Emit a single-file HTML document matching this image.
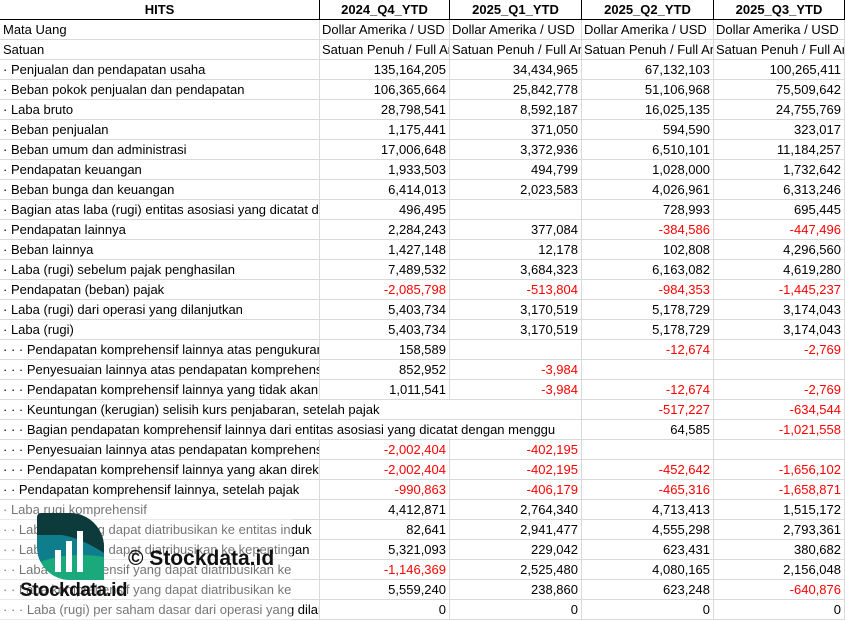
<!DOCTYPE html>
<html><head><meta charset="utf-8"><style>
*{margin:0;padding:0;box-sizing:border-box}
body{width:845px;height:621px;background:#fff;position:relative;overflow:hidden;font-family:"Liberation Sans",Calibri,sans-serif;font-size:13px;color:#000}
.r{position:absolute;left:0;width:845px;height:20px;border-bottom:1px solid #d9d9d9}
.c{position:absolute;top:0;height:19px;line-height:19px;white-space:nowrap;overflow:hidden;border-right:1px solid #d9d9d9}
.l{left:0;width:320px;padding-left:3px}
.a{left:320px;width:130px;text-align:right;padding-right:3px}
.b{left:450px;width:132px;text-align:right;padding-right:3px}
.d{left:582px;width:132px;text-align:right;padding-right:3px}
.e{left:714px;width:131px;text-align:right;padding-right:3px}
.t .a,.t .b,.t .d,.t .e{text-align:left;padding-left:2px;padding-right:0}
.h{border-bottom:1px solid #000}
.h .c{font-weight:bold;text-align:center;border-right:1px solid #000;padding:0}
.n{color:#ff0000}
.wide{width:580px;overflow:visible;background:transparent;border-right:none}
.nb{border-right:none}
</style></head><body>
<div class="r h" style="top:0"><div class="c l">HITS</div><div class="c a">2024_Q4_YTD</div><div class="c b">2025_Q1_YTD</div><div class="c d">2025_Q2_YTD</div><div class="c e">2025_Q3_YTD</div></div>
<div class="r t" style="top:20px"><div class="c l">Mata Uang</div><div class="c a">Dollar Amerika / USD</div><div class="c b">Dollar Amerika / USD</div><div class="c d">Dollar Amerika / USD</div><div class="c e">Dollar Amerika / USD</div></div>
<div class="r t" style="top:40px"><div class="c l">Satuan</div><div class="c a">Satuan Penuh / Full Amount</div><div class="c b">Satuan Penuh / Full Amount</div><div class="c d">Satuan Penuh / Full Amount</div><div class="c e">Satuan Penuh / Full Amount</div></div>
<div class="r" style="top:60px"><div class="c l">· Penjualan dan pendapatan usaha</div><div class="c a">135,164,205</div><div class="c b">34,434,965</div><div class="c d">67,132,103</div><div class="c e">100,265,411</div></div>
<div class="r" style="top:80px"><div class="c l">· Beban pokok penjualan dan pendapatan</div><div class="c a">106,365,664</div><div class="c b">25,842,778</div><div class="c d">51,106,968</div><div class="c e">75,509,642</div></div>
<div class="r" style="top:100px"><div class="c l">· Laba bruto</div><div class="c a">28,798,541</div><div class="c b">8,592,187</div><div class="c d">16,025,135</div><div class="c e">24,755,769</div></div>
<div class="r" style="top:120px"><div class="c l">· Beban penjualan</div><div class="c a">1,175,441</div><div class="c b">371,050</div><div class="c d">594,590</div><div class="c e">323,017</div></div>
<div class="r" style="top:140px"><div class="c l">· Beban umum dan administrasi</div><div class="c a">17,006,648</div><div class="c b">3,372,936</div><div class="c d">6,510,101</div><div class="c e">11,184,257</div></div>
<div class="r" style="top:160px"><div class="c l">· Pendapatan keuangan</div><div class="c a">1,933,503</div><div class="c b">494,799</div><div class="c d">1,028,000</div><div class="c e">1,732,642</div></div>
<div class="r" style="top:180px"><div class="c l">· Beban bunga dan keuangan</div><div class="c a">6,414,013</div><div class="c b">2,023,583</div><div class="c d">4,026,961</div><div class="c e">6,313,246</div></div>
<div class="r" style="top:200px"><div class="c l">· Bagian atas laba (rugi) entitas asosiasi yang dicatat dengan metode ekuitas</div><div class="c a">496,495</div><div class="c b"></div><div class="c d">728,993</div><div class="c e">695,445</div></div>
<div class="r" style="top:220px"><div class="c l">· Pendapatan lainnya</div><div class="c a">2,284,243</div><div class="c b">377,084</div><div class="c d n">-384,586</div><div class="c e n">-447,496</div></div>
<div class="r" style="top:240px"><div class="c l">· Beban lainnya</div><div class="c a">1,427,148</div><div class="c b">12,178</div><div class="c d">102,808</div><div class="c e">4,296,560</div></div>
<div class="r" style="top:260px"><div class="c l">· Laba (rugi) sebelum pajak penghasilan</div><div class="c a">7,489,532</div><div class="c b">3,684,323</div><div class="c d">6,163,082</div><div class="c e">4,619,280</div></div>
<div class="r" style="top:280px"><div class="c l">· Pendapatan (beban) pajak</div><div class="c a n">-2,085,798</div><div class="c b n">-513,804</div><div class="c d n">-984,353</div><div class="c e n">-1,445,237</div></div>
<div class="r" style="top:300px"><div class="c l">· Laba (rugi) dari operasi yang dilanjutkan</div><div class="c a">5,403,734</div><div class="c b">3,170,519</div><div class="c d">5,178,729</div><div class="c e">3,174,043</div></div>
<div class="r" style="top:320px"><div class="c l">· Laba (rugi)</div><div class="c a">5,403,734</div><div class="c b">3,170,519</div><div class="c d">5,178,729</div><div class="c e">3,174,043</div></div>
<div class="r" style="top:340px"><div class="c l">· · · Pendapatan komprehensif lainnya atas pengukuran kembali</div><div class="c a">158,589</div><div class="c b"></div><div class="c d n">-12,674</div><div class="c e n">-2,769</div></div>
<div class="r" style="top:360px"><div class="c l">· · · Penyesuaian lainnya atas pendapatan komprehensif</div><div class="c a">852,952</div><div class="c b n">-3,984</div><div class="c d"></div><div class="c e"></div></div>
<div class="r" style="top:380px"><div class="c l">· · · Pendapatan komprehensif lainnya yang tidak akan</div><div class="c a">1,011,541</div><div class="c b n">-3,984</div><div class="c d n">-12,674</div><div class="c e n">-2,769</div></div>
<div class="r" style="top:400px"><div class="c a nb"></div><div class="c b"></div><div class="c d n">-517,227</div><div class="c e n">-634,544</div><div class="c l wide">· · · Keuntungan (kerugian) selisih kurs penjabaran, setelah pajak</div></div>
<div class="r" style="top:420px"><div class="c a nb"></div><div class="c b"></div><div class="c d">64,585</div><div class="c e n">-1,021,558</div><div class="c l wide">· · · Bagian pendapatan komprehensif lainnya dari entitas asosiasi yang dicatat dengan menggu</div></div>
<div class="r" style="top:440px"><div class="c l">· · · Penyesuaian lainnya atas pendapatan komprehensif</div><div class="c a n">-2,002,404</div><div class="c b n">-402,195</div><div class="c d"></div><div class="c e"></div></div>
<div class="r" style="top:460px"><div class="c l">· · · Pendapatan komprehensif lainnya yang akan direklasifikasi</div><div class="c a n">-2,002,404</div><div class="c b n">-402,195</div><div class="c d n">-452,642</div><div class="c e n">-1,656,102</div></div>
<div class="r" style="top:480px"><div class="c l">· · Pendapatan komprehensif lainnya, setelah pajak</div><div class="c a n">-990,863</div><div class="c b n">-406,179</div><div class="c d n">-465,316</div><div class="c e n">-1,658,871</div></div>
<div class="r" style="top:500px"><div class="c l">· Laba rugi komprehensif</div><div class="c a">4,412,871</div><div class="c b">2,764,340</div><div class="c d">4,713,413</div><div class="c e">1,515,172</div></div>
<div class="r" style="top:520px"><div class="c l">· · Laba rugi yang dapat diatribusikan ke entitas induk</div><div class="c a">82,641</div><div class="c b">2,941,477</div><div class="c d">4,555,298</div><div class="c e">2,793,361</div></div>
<div class="r" style="top:540px"><div class="c l">· · Laba rugi yang dapat diatribusikan ke kepentingan</div><div class="c a">5,321,093</div><div class="c b">229,042</div><div class="c d">623,431</div><div class="c e">380,682</div></div>
<div class="r" style="top:560px"><div class="c l">· · Laba komprehensif yang dapat diatribusikan ke</div><div class="c a n">-1,146,369</div><div class="c b">2,525,480</div><div class="c d">4,080,165</div><div class="c e">2,156,048</div></div>
<div class="r" style="top:580px"><div class="c l">· · Laba komprehensif yang dapat diatribusikan ke</div><div class="c a">5,559,240</div><div class="c b">238,860</div><div class="c d">623,248</div><div class="c e n">-640,876</div></div>
<div class="r" style="top:600px"><div class="c l">· · · Laba (rugi) per saham dasar dari operasi yang dilanjutkan</div><div class="c a">0</div><div class="c b">0</div><div class="c d">0</div><div class="c e">0</div></div>

<div style="position:absolute;left:0;top:500px;width:292px;height:121px;background:rgba(255,255,255,0.45)"></div>
<svg style="position:absolute;left:37px;top:513px" width="67" height="67" viewBox="0 0 67 67">
<defs><clipPath id="k"><path d="M4 0H33A34 34 0 0 1 67 34V67H33A33 33 0 0 1 0 34V4A4 4 0 0 1 4 0Z"/></clipPath></defs>
<g clip-path="url(#k)">
<rect width="67" height="22" fill="#0d3b3c"/>
<rect y="22" width="67" height="20" fill="#0e7d8c"/>
<path d="M0 42H67V67H0Z" fill="#1aa97a"/>
<path d="M0 22Q30 16 67 40V22Z" fill="#0d3b3c"/>
<path d="M0 50Q30 38 67 44V42H0Z" fill="#0e7d8c"/>
</g>
<rect x="18" y="37" width="6" height="22" fill="#fff"/>
<rect x="29" y="28" width="6" height="31" fill="#fff"/>
<rect x="40" y="18" width="6" height="41" fill="#fff"/>
</svg>
<div style="position:absolute;left:20px;top:580px;font-weight:bold;font-size:19px;color:#111;letter-spacing:-0.5px">Stockdata.id</div>
<div style="position:absolute;left:128px;top:547px;font-weight:bold;font-size:21px;color:#111">© Stockdata.id</div>
</body></html>
